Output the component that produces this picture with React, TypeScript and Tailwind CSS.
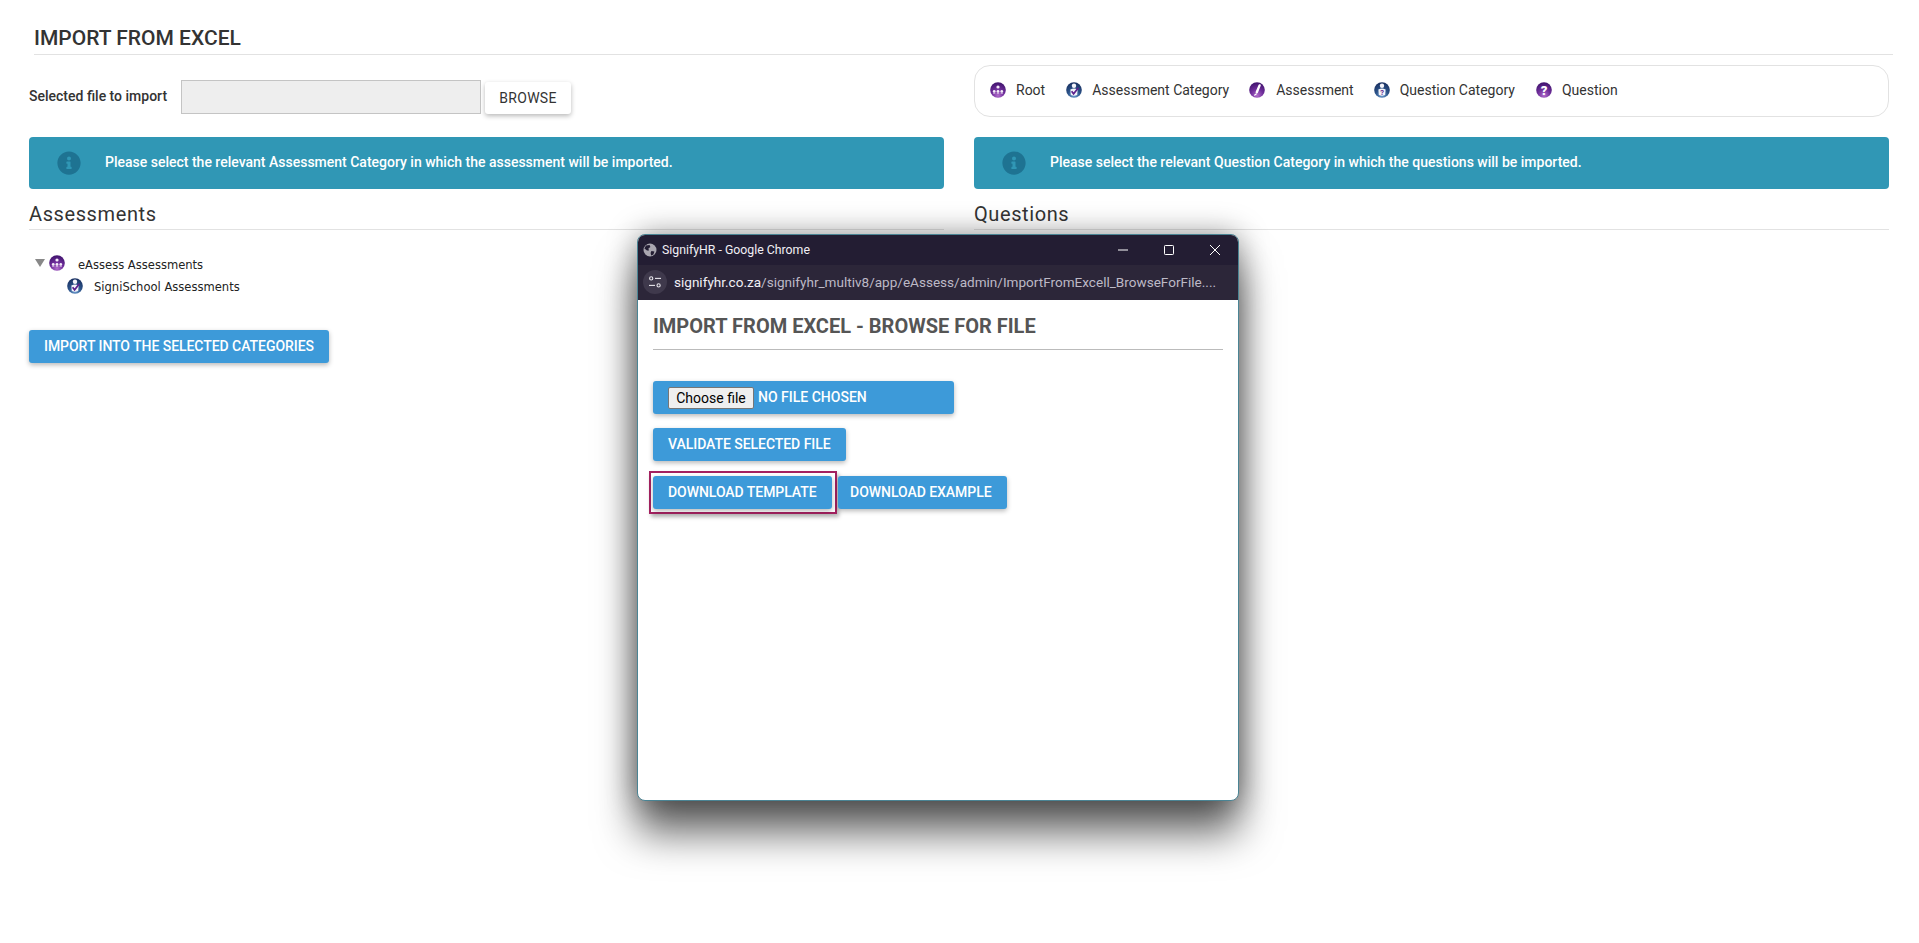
import React from "react";
import { FaInfoCircle } from "react-icons/fa";

const Sphere = ({ id, from, mid, to, children }: { id: string; from: string; mid: string; to: string; children?: React.ReactNode }) => (
  <svg width="16" height="16" viewBox="0 0 16 16" className="shrink-0">
    <defs>
      <radialGradient id={id} cx="50%" cy="85%" r="80%">
        <stop offset="0%" stopColor={from} />
        <stop offset="50%" stopColor={mid} />
        <stop offset="100%" stopColor={to} />
      </radialGradient>
    </defs>
    <circle cx="8" cy="8" r="7.8" fill={`url(#${id})`} />
    {children}
  </svg>
);

const People = () => (
  <g fill="#f4ecf8">
    <circle cx="8" cy="5" r="1.6" />
    <circle cx="4.2" cy="9.2" r="1.3" />
    <circle cx="8" cy="9.2" r="1.3" />
    <circle cx="11.8" cy="9.2" r="1.3" />
    <rect x="3" y="10.4" width="2.4" height="1.2" rx="0.5" />
    <rect x="6.8" y="10.4" width="2.4" height="1.2" rx="0.5" />
    <rect x="10.6" y="10.4" width="2.4" height="1.2" rx="0.5" />
  </g>
);

const RootIcon = ({ id }: { id: string }) => (
  <Sphere id={id} from="#b06ccb" mid="#6f2e9b" to="#431570"><People /></Sphere>
);

const PersonBadge = ({ children }: { children: React.ReactNode }) => (
  <g>
    <circle cx="8" cy="3.8" r="2.2" fill="#f4f4fa" />
    <path d="M4.4 7.6 Q8 5.6 11.6 7.6 L11.2 13 Q8 14.4 4.8 13 Z" fill="#f4f4fa" />
    {children}
  </g>
);

const CategoryIcon = ({ id }: { id: string }) => (
  <Sphere id={id} from="#6b9ccf" mid="#2b5288" to="#1a3263">
    <PersonBadge>
      <path d="M5.6 9.2 L7.6 11.8 L12.4 5.8" fill="none" stroke="#5b1f8c" strokeWidth="1.7" />
    </PersonBadge>
  </Sphere>
);

const QuestionCategoryIcon = ({ id }: { id: string }) => (
  <Sphere id={id} from="#6b9ccf" mid="#2b5288" to="#1a3263">
    <PersonBadge>
      <text x="8" y="12.8" textAnchor="middle" fontSize="7.5" fontWeight="700" fill="#5b1f8c" fontFamily="Roboto, sans-serif">?</text>
    </PersonBadge>
  </Sphere>
);

const AssessmentIcon = ({ id }: { id: string }) => (
  <Sphere id={id} from="#b06ccb" mid="#6f2e9b" to="#431570">
    <path d="M10.6 3.4 L7.8 10.2" stroke="#fff" strokeWidth="2.4" strokeLinecap="round" />
    <path d="M7.2 12 L5.8 13" stroke="#fff" strokeWidth="1.4" strokeLinecap="round" />
  </Sphere>
);

const QuestionIcon = ({ id }: { id: string }) => (
  <Sphere id={id} from="#b06ccb" mid="#6f2e9b" to="#431570">
    <text x="8" y="12.8" textAnchor="middle" fontSize="13" fontWeight="900" fill="#fff" fontFamily="Roboto, sans-serif">?</text>
  </Sphere>
);

const Alert = ({ text }: { text: string }) => (
  <div className="mt-[20px] flex h-[52px] items-center rounded-[4px] bg-[#3097b5] pl-[28px] text-[14px] font-medium text-white">
    <FaInfoCircle className="h-[24px] w-[24px] text-[#1e7392]" />
    <span className="mb-[2px] ml-[24px]">{text}</span>
  </div>
);

const Heading = ({ text }: { text: string }) => (
  <div className="mt-[11px] border-b border-[#e2e2e2] pb-px text-[20px] leading-[28px] tracking-[0.6px] text-[#333]">{text}</div>
);

const LegendItem = ({ icon, label, gap }: { icon: React.ReactNode; label: string; gap: string }) => (
  <div className={`flex items-center ${gap}`}>
    {icon}
    <span>{label}</span>
  </div>
);

const Btn = ({ children, className = "" }: { children: React.ReactNode; className?: string }) => (
  <button className={`flex h-[33px] items-center rounded-[3px] bg-[#3d9ad9] px-[15px] text-[14px] font-medium tracking-[-0.05px] whitespace-nowrap text-white shadow-[0_2px_5px_rgba(0,0,0,0.28)] ${className}`}>
    {children}
  </button>
);

export default function App() {
  return (
    <div className="relative h-[943px] w-full overflow-hidden bg-white font-['Roboto',sans-serif] text-[#333]">
      <div className="mr-[26px] ml-[34px] border-b border-[#e2e2e2] pt-[26px] pb-[4px] text-[21px] leading-[24px] font-medium text-[#333]">
        IMPORT FROM EXCEL
      </div>

      <div className="grid grid-cols-2 gap-x-[30px] pr-[30px] pl-[29px]">
        <div className="flex h-[62px] items-start pt-[25px]">
          <div className="flex items-center">
            <label className="mb-[2px] w-[152px] text-[14px] font-medium text-[#333]">Selected file to import</label>
            <div className="h-[34px] w-[300px] border border-[#c4c4c4] bg-[#eee]" />
            <button className="mt-[2px] ml-[4px] h-[32px] w-[86px] rounded-[3px] bg-white text-[14px] tracking-[0.3px] text-[#333] shadow-[0_2px_5px_rgba(0,0,0,0.28)]">BROWSE</button>
          </div>
        </div>
        <div className="mt-[10px] flex h-[52px] items-center rounded-[16px] border border-[#e2e2e2] pb-[2px] pl-[15px] text-[14px] text-[#333]">
          <LegendItem icon={<RootIcon id="l1" />} label="Root" gap="gap-[10px] mr-[21px]" />
          <LegendItem icon={<CategoryIcon id="l2" />} label="Assessment Category" gap="gap-[10px] mr-[20px]" />
          <LegendItem icon={<AssessmentIcon id="l3" />} label="Assessment" gap="gap-[11px] mr-[20px]" />
          <LegendItem icon={<QuestionCategoryIcon id="l4" />} label="Question Category" gap="gap-[10px] mr-[21px]" />
          <LegendItem icon={<QuestionIcon id="l5" />} label="Question" gap="gap-[10px]" />
        </div>

        <Alert text="Please select the relevant Assessment Category in which the assessment will be imported." />
        <Alert text="Please select the relevant Question Category in which the questions will be imported." />

        <Heading text="Assessments" />
        <Heading text="Questions" />

        <div className="col-start-1">
          <div className="mt-[27px] flex h-[18px] items-center pl-[6px] font-['DejaVu_Sans',sans-serif] text-[11.55px] text-[#222]">
            <span className="mt-[-6px] h-0 w-0 border-x-[5px] border-t-[8px] border-x-transparent border-t-[#888]" />
            <span className="mt-[-6px] ml-[4px]"><RootIcon id="t1" /></span>
            <span className="ml-[13px]">eAssess Assessments</span>
          </div>
          <div className="mt-[4px] flex h-[18px] items-center pl-[38px] font-['DejaVu_Sans',sans-serif] text-[11.55px] text-[#222]">
            <span className="mt-[-5px]"><CategoryIcon id="t2" /></span>
            <span className="ml-[11px]">SigniSchool Assessments</span>
          </div>
          <Btn className="mt-[33px] h-[32px]">IMPORT INTO THE SELECTED CATEGORIES</Btn>
        </div>
      </div>

      <div className="absolute top-[234px] left-[637px] flex h-[567px] w-[602px] flex-col overflow-hidden rounded-[8px] border border-[#4a8494] bg-white shadow-[0_32px_40px_rgba(0,0,0,0.6),0_0_30px_rgba(0,0,0,0.4)]">
        <div className="flex h-[30px] shrink-0 items-center bg-[#231d33] pl-[5px] text-[12.3px] text-[#f1eff5]">
          <svg width="14" height="14" viewBox="0 0 14 14" className="shrink-0">
            <circle cx="7" cy="7" r="6.5" fill="#a9a6b0" />
            <path d="M3 2.6 L6.6 2 L7.4 4 L5.4 5.4 L6 7.4 L4 7.6 L1.4 5.4 Z M8.4 8 L11.4 8.6 L10.4 11.6 L8.2 12.6 L7.6 10 Z" fill="#231d33" />
          </svg>
          <span className="ml-[5px]">SignifyHR - Google Chrome</span>
          <div className="ml-auto flex items-center pr-[17px]">
            <svg width="12" height="12" viewBox="0 0 12 12"><path d="M1 6 H11" stroke="#fff" strokeWidth="1" /></svg>
            <svg width="12" height="12" viewBox="0 0 12 12" className="ml-[34px]"><rect x="1.5" y="1.5" width="9" height="9" rx="0.8" fill="none" stroke="#fff" strokeWidth="1" /></svg>
            <svg width="12" height="12" viewBox="0 0 12 12" className="ml-[34px]"><path d="M1 1 L11 11 M11 1 L1 11" stroke="#fff" strokeWidth="1" /></svg>
          </div>
        </div>
        <div className="flex h-[35px] shrink-0 items-center bg-[#2c2639] pb-[1px] pl-[5px] text-[13.56px] whitespace-nowrap">
          <div className="flex h-[24px] w-[24px] shrink-0 items-center justify-center rounded-full bg-[#3f394c]">
            <svg width="14" height="14" viewBox="0 0 14 14" fill="none" stroke="#e8e6ec" strokeWidth="1.1">
              <circle cx="3.2" cy="3.4" r="1.6" />
              <path d="M7 3.4 H13" />
              <path d="M1 10.4 H7" />
              <circle cx="10.6" cy="10.4" r="1.6" />
            </svg>
          </div>
          <span className="ml-[7px] text-[#f1eff5]">signifyhr.co.za</span>
          <span className="text-[#bdb9c6]">/signifyhr_multiv8/app/eAssess/admin/ImportFromExcell_BrowseForFile....</span>
        </div>
        <div className="flex flex-1 flex-col items-start px-[15px]">
          <div className="w-full border-b border-[#bbb] pt-[13px] pb-[10px] text-[20px] leading-[26px] font-bold text-[#555]">
            IMPORT FROM EXCEL - BROWSE FOR FILE
          </div>
          <div className="mt-[31px] flex h-[33px] w-[301px] items-center rounded-[3px] bg-[#3d9ad9] pl-[15px] text-[14px] font-medium text-white shadow-[0_2px_5px_rgba(0,0,0,0.28)]">
            <button className="h-[22px] w-[86px] rounded-[2px] border border-[#767676] bg-[#efefef] text-[14px] font-normal text-black">Choose file</button>
            <span className="ml-[4px]">NO FILE CHOSEN</span>
          </div>
          <Btn className="mt-[14px]">VALIDATE SELECTED FILE</Btn>
          <div className="mt-[10px] flex items-center">
            <div className="-ml-[4px] border-2 border-[#a3215f] py-[3px] pr-[3px] pl-[2px] shadow-[2px_3px_4px_rgba(0,0,0,0.3)]">
              <Btn className="h-[32px]">DOWNLOAD TEMPLATE</Btn>
            </div>
            <Btn className="ml-px h-[32px] pr-[15px] pl-[12.5px]">DOWNLOAD EXAMPLE</Btn>
          </div>
        </div>
      </div>
    </div>
  );
}
